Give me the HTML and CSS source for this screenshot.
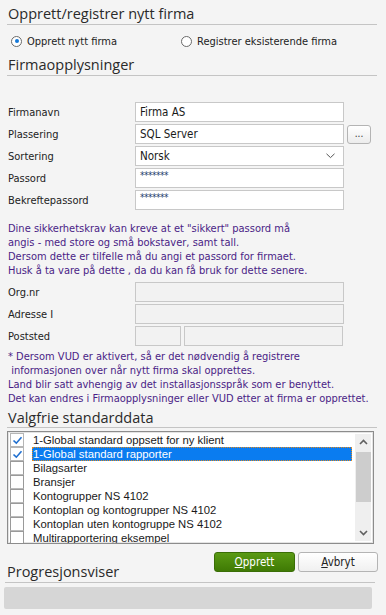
FILE: index.html
```html
<!DOCTYPE html>
<html>
<head>
<meta charset="utf-8">
<link rel="stylesheet" href="styles.css">
</head>
<body>
<div class="page">
  <h2 class="heading h1">Opprett/registrer nytt firma</h2>
  <div class="radios">
    <label class="radio"><span class="rbtn on"></span>Opprett nytt firma</label>
    <label class="radio second"><span class="rbtn"></span>Registrer eksisterende firma</label>
  </div>
  <h2 class="heading h2">Firmaopplysninger</h2>

  <div class="form">
    <div class="row"><span class="lbl">Firmanavn</span><div class="input">Firma AS</div></div>
    <div class="row"><span class="lbl">Plassering</span><div class="input">SQL Server</div><div class="dots">...</div></div>
    <div class="row"><span class="lbl">Sortering</span><div class="input select">Norsk<svg class="chev" width="9" height="6" viewBox="0 0 9 6"><path d="M0.5 0.8 L4.5 4.6 L8.5 0.8" fill="none" stroke="#555" stroke-width="1"/></svg></div></div>
    <div class="row"><span class="lbl">Passord</span><div class="input pw">*******</div></div>
    <div class="row"><span class="lbl">Bekreftepassord</span><div class="input pw">*******</div></div>
  </div>

  <div class="info">
    <div>Dine sikkerhetskrav kan kreve at et "sikkert" passord må</div>
    <div>angis - med store og små bokstaver, samt tall.</div>
    <div>Dersom dette er tilfelle må du angi et passord for firmaet.</div>
    <div>Husk å ta vare på dette , da du kan få bruk for dette senere.</div>
  </div>

  <div class="form form2">
    <div class="row"><span class="lbl">Org.nr</span><div class="input dis"></div></div>
    <div class="row"><span class="lbl">Adresse I</span><div class="input dis"></div></div>
    <div class="row"><span class="lbl">Poststed</span><div class="input dis small"></div><div class="input dis rest"></div></div>
  </div>

  <div class="info note">
    <div>* Dersom VUD er aktivert, så er det nødvendig å registrere</div>
    <div>&nbsp;informasjonen over når nytt firma skal opprettes.</div>
    <div>Land blir satt avhengig av det installasjonsspråk som er benyttet.</div>
    <div>Det kan endres i Firmaopplysninger eller VUD etter at firma er opprettet.</div>
  </div>

  <h2 class="heading h3">Valgfrie standarddata</h2>

  <div class="listbox">
    <div class="items">
      <div class="item"><span class="cb checked"><svg width="11" height="11" viewBox="0 0 11 11"><path d="M1.5 5.5 L4.3 8.2 L9.5 2.2" fill="none" stroke="#1f6fd0" stroke-width="1.6"/></svg></span><span class="txt">1-Global standard oppsett for ny klient</span></div>
      <div class="item sel"><span class="cb checked"><svg width="11" height="11" viewBox="0 0 11 11"><path d="M1.5 5.5 L4.3 8.2 L9.5 2.2" fill="none" stroke="#1f6fd0" stroke-width="1.6"/></svg></span><span class="txt">1-Global standard rapporter</span></div>
      <div class="item"><span class="cb"></span><span class="txt">Bilagsarter</span></div>
      <div class="item"><span class="cb"></span><span class="txt">Bransjer</span></div>
      <div class="item"><span class="cb"></span><span class="txt">Kontogrupper NS 4102</span></div>
      <div class="item"><span class="cb"></span><span class="txt">Kontoplan og kontogrupper NS 4102</span></div>
      <div class="item"><span class="cb"></span><span class="txt">Kontoplan uten kontogruppe NS 4102</span></div>
      <div class="item"><span class="cb"></span><span class="txt">Multirapportering eksempel</span></div>
    </div>
    <div class="scroll">
      <svg class="arr" width="9" height="6" viewBox="0 0 9 6"><path d="M1 5 L4.5 1.5 L8 5" fill="none" stroke="#606060" stroke-width="1.6"/></svg>
      <div class="thumb"></div>
      <div class="spacer"></div>
      <svg class="arr" width="9" height="6" viewBox="0 0 9 6"><path d="M1 1 L4.5 4.5 L8 1" fill="none" stroke="#606060" stroke-width="1.6"/></svg>
    </div>
  </div>

  <div class="footer">
    <h2 class="heading h4">Progresjonsviser</h2>
    <div class="buttons">
      <div class="btn ok"><u>O</u>pprett</div>
      <div class="btn cancel"><u>A</u>vbryt</div>
    </div>
  </div>
  <div class="progress"></div>
</div>
</body>
</html>
```

FILE: styles.css
```css
html, body {
  margin: 0;
  padding: 0;
  background: #f4f4f4;
}
body {
  font-family: "DejaVu Sans Condensed", "DejaVu Sans", sans-serif;
  font-stretch: condensed;
  font-size: 11px;
  color: #222;
}
.page {
  width: 386px;
  height: 615px;
  overflow: hidden;
  position: relative;
}
.heading {
  font-family: "Open Sans", sans-serif;
  font-stretch: normal;
  font-weight: 400;
  font-size: 14.5px;
  color: #2a2a2a;
  margin: 0;
  line-height: 18px;
  border-bottom: 1px solid #c4c4c4;
  padding-left: 1px;
}
.h1 {
  margin: 5px 9px 0 7px;
  height: 19px;
}
.radios {
  display: flex;
  height: 16px;
  margin-top: 8px;
  align-items: center;
}
.radio {
  display: flex;
  align-items: center;
  padding-left: 11px;
}
.radio.second {
  padding-left: 0;
  margin-left: 64px;
}
.rbtn {
  width: 11px;
  height: 11px;
  border: 1px solid #6a6a6a;
  border-radius: 50%;
  box-sizing: border-box;
  background: #fff;
  margin-right: 5px;
  position: relative;
}
.rbtn.on::after {
  content: "";
  position: absolute;
  left: 2.5px;
  top: 2.5px;
  width: 4px;
  height: 4px;
  border-radius: 50%;
  background: #1478d8;
}
.h2 {
  margin: 7px 9px 0 7px;
  height: 19px;
}
.form {
  margin-top: 26px;
  display: flex;
  flex-direction: column;
  gap: 2px;
}
.row {
  display: flex;
  align-items: center;
  height: 20px;
}
.lbl {
  width: 127px;
  padding-left: 8px;
}
.input {
  box-sizing: border-box;
  width: 209px;
  height: 20px;
  border: 1px solid #c8c8c8;
  background: #fff;
  padding-left: 4px;
  line-height: 18px;
  font-size: 11.5px;
  color: #1a1a1a;
  display: flex;
  align-items: center;
}
.select {
  justify-content: space-between;
  padding-right: 8px;
}
.pw {
  font-size: 10px;
  color: #23426e;
  letter-spacing: -0.5px;
  align-items: flex-start;
  line-height: 14px;
}
.dots {
  box-sizing: border-box;
  width: 24px;
  height: 19px;
  margin-left: 3px;
  border: 1px solid #b4b4b4;
  border-radius: 3px;
  background: linear-gradient(#ffffff, #ececec);
  font-size: 10px;
  text-align: center;
  line-height: 16px;
  color: #333;
}
.info {
  margin-top: 12px;
  padding-left: 8px;
  color: #4a1d86;
  line-height: 14px;
  font-size: 11px;
}
.form2 {
  margin-top: 4px;
}
.dis {
  background: #f2f2f2;
}
.small {
  width: 46px;
}
.rest {
  width: 159px;
  margin-left: 3px;
}
.note {
  margin-top: 4px;
}
.h3 {
  margin: 3px 9px 0 7px;
  height: 18px;
}
.listbox {
  margin: 3px 0 0 7px;
  width: 367px;
  height: 113px;
  box-sizing: border-box;
  border: 1px solid #8c8c8c;
  box-shadow: inset 0 0 0 1px #e4e4e4;
  background: #fff;
  display: flex;
  overflow: hidden;
}
.items {
  flex: 1;
  padding-top: 1px;
  padding-left: 2px;
  overflow: hidden;
}
.item {
  display: flex;
  align-items: center;
  height: 14px;
  font-family: "Liberation Sans", Arial, sans-serif;
  font-stretch: normal;
  font-size: 11.3px;
  color: #1a1a1a;
  white-space: nowrap;
}
.cb {
  box-sizing: border-box;
  width: 14px;
  height: 14px;
  border: 1px solid #9a9a9a;
  border-bottom-color: #bbb;
  background: #fff;
  margin-right: 8px;
  display: flex;
  align-items: center;
  justify-content: center;
  flex: none;
}
.checked {
  border-color: #b6b6b6;
}
.item .txt {
  padding-left: 1px;
  height: 14px;
  line-height: 14px;
}
.item.sel .txt {
  background: #0a7cf0;
  color: #fff;
  width: 320px;
  box-sizing: border-box;
  outline: 1px dotted #e08a20;
  outline-offset: -1px;
}
.scroll {
  width: 16px;
  margin: 2px 2px 2px 0;
  background: #efefef;
  display: flex;
  flex-direction: column;
  align-items: center;
}
.arr {
  margin: 5px 0;
}
.thumb {
  width: 15px;
  height: 50px;
  background: #cdcdcd;
  margin-top: 2px;
}
.spacer {
  flex: 1;
}
.footer {
  margin: 8px 11px 0 5px;
  display: flex;
  justify-content: space-between;
  align-items: flex-end;
  border-bottom: 1px solid #c4c4c4;
}
.h4 {
  border-bottom: none;
  padding-left: 2px;
  padding-bottom: 1px;
  line-height: 18px;
}
.buttons {
  display: flex;
  gap: 3px;
  margin-bottom: 10px;
  margin-right: -3px;
}
.btn {
  box-sizing: border-box;
  height: 20px;
  line-height: 18px;
  text-align: center;
  border-radius: 3px;
  font-size: 11.5px;
}
.ok {
  width: 81px;
  background: linear-gradient(#5a9a14, #3f7a04);
  border: 1px solid #3a6e06;
  color: #fff;
}
.cancel {
  width: 80px;
  background: linear-gradient(#ffffff, #f0f0f0);
  border: 1px solid #b4b4b4;
  color: #222;
}
.progress {
  margin: 4px 14px 0 4px;
  height: 22px;
  background: #d6d6d6;
  border-radius: 2px;
}
```
